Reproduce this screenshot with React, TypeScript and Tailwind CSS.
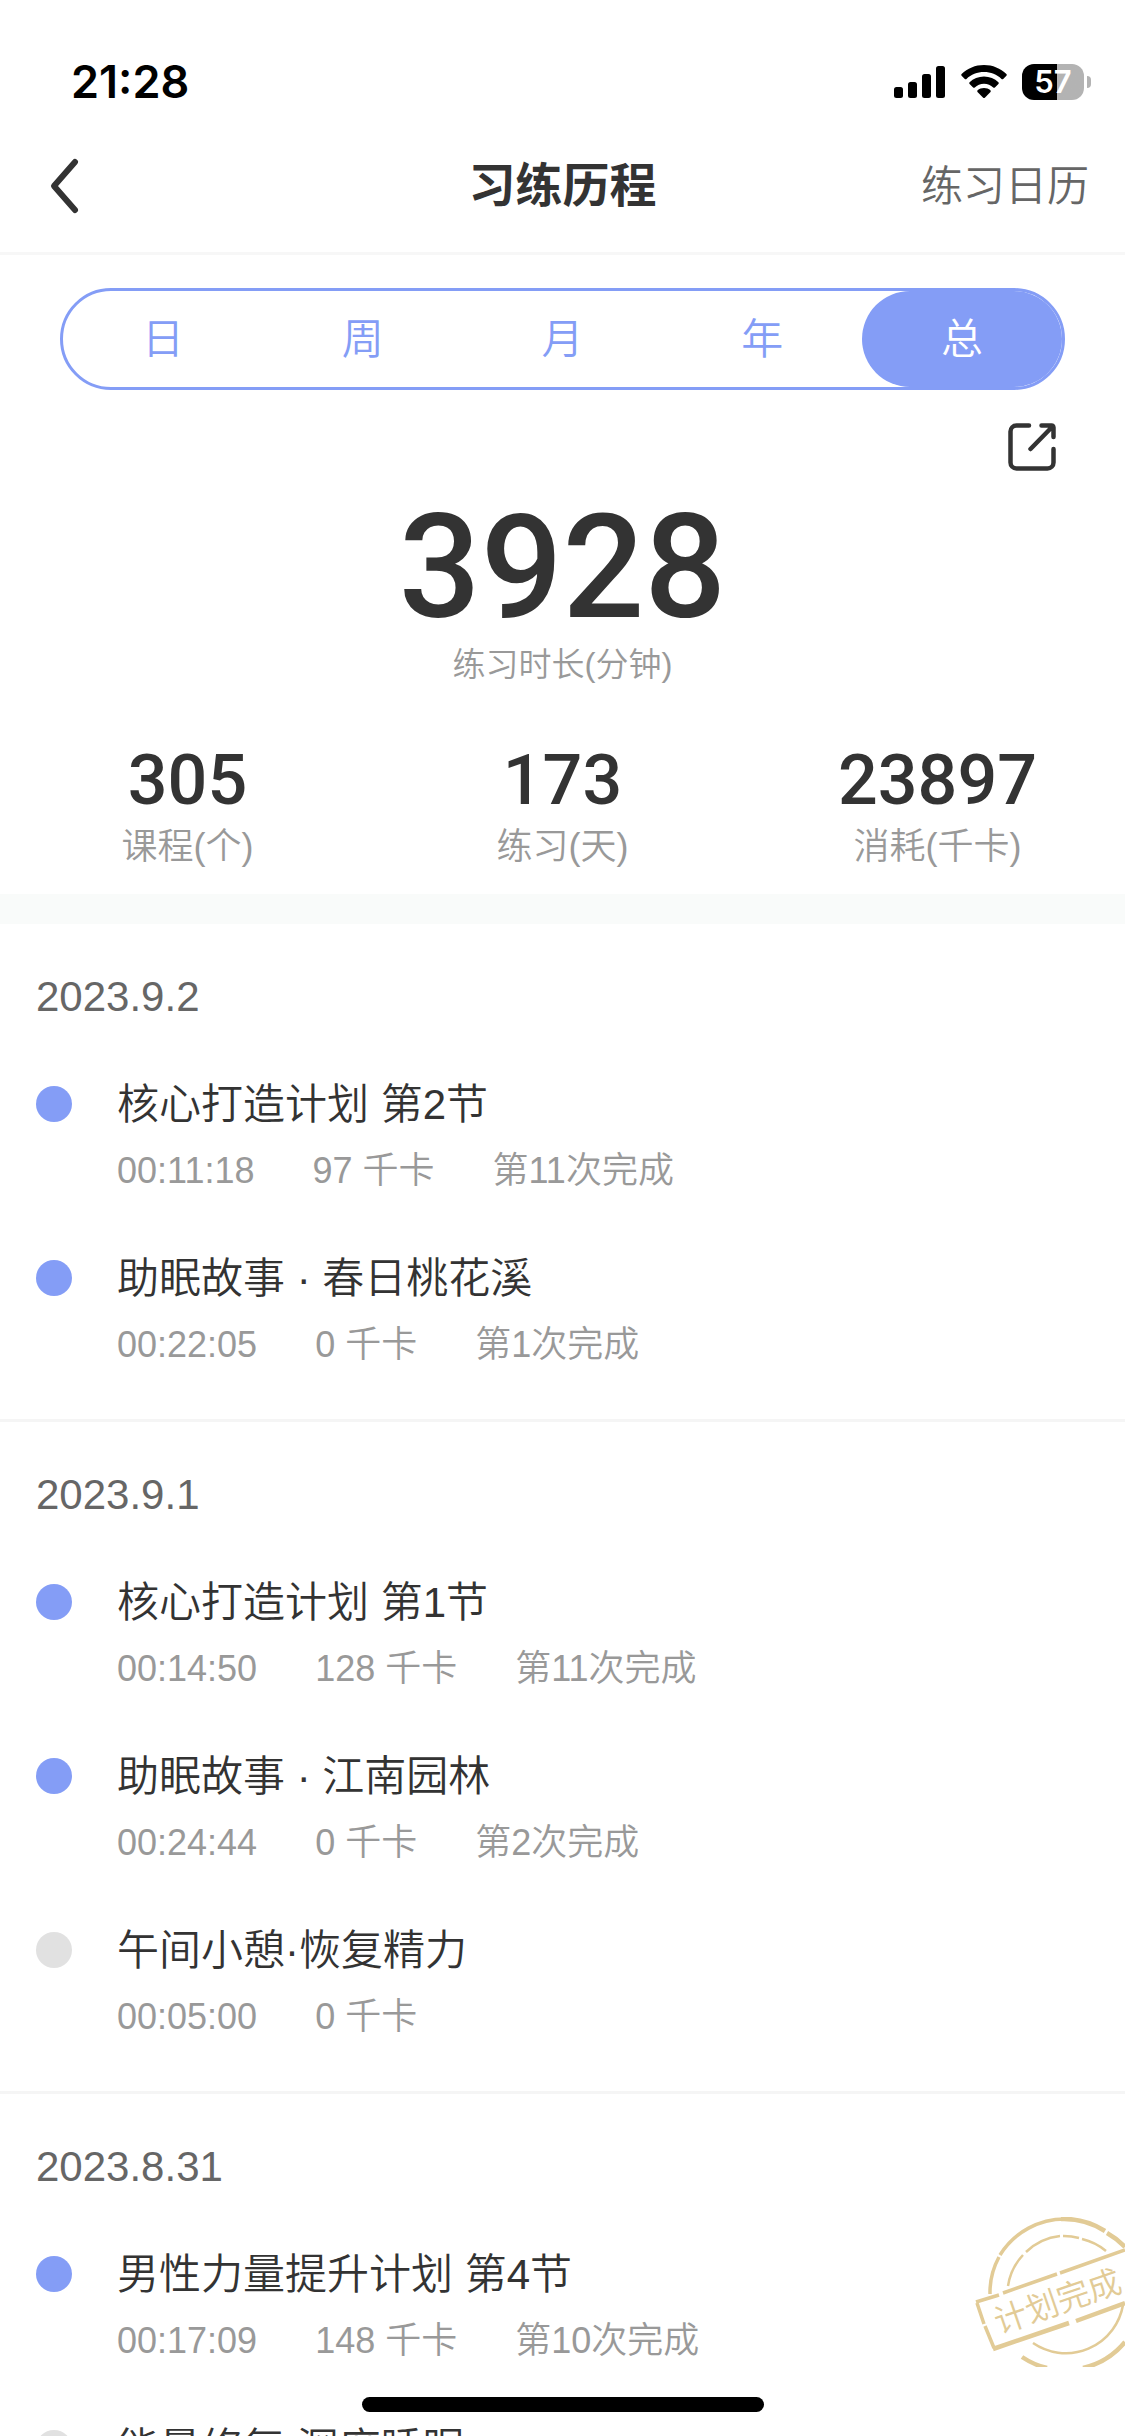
import React from "react";

interface Stat {
  value: string;
  label: string;
}

interface Practice {
  title: string;
  duration: string;
  calories: string;
  times?: string;
  planFinished?: boolean;
}

interface PracticeDay {
  date: string;
  items: Practice[];
}

const tabs = ["日", "周", "月", "年", "总"];

const stats: Stat[] = [
  { value: "305", label: "课程(个)" },
  { value: "173", label: "练习(天)" },
  { value: "23897", label: "消耗(千卡)" },
];

const days: PracticeDay[] = [
  {
    date: "2023.9.2",
    items: [
      { title: "核心打造计划 第2节", duration: "00:11:18", calories: "97 千卡", times: "第11次完成" },
      { title: "助眠故事 · 春日桃花溪", duration: "00:22:05", calories: "0 千卡", times: "第1次完成" },
    ],
  },
  {
    date: "2023.9.1",
    items: [
      { title: "核心打造计划 第1节", duration: "00:14:50", calories: "128 千卡", times: "第11次完成" },
      { title: "助眠故事 · 江南园林", duration: "00:24:44", calories: "0 千卡", times: "第2次完成" },
      { title: "午间小憩·恢复精力", duration: "00:05:00", calories: "0 千卡" },
    ],
  },
  {
    date: "2023.8.31",
    items: [
      {
        title: "男性力量提升计划 第4节",
        duration: "00:17:09",
        calories: "148 千卡",
        times: "第10次完成",
        planFinished: true,
      },
      { title: "能量修复 深度睡眠", duration: "00:10:00", calories: "0 千卡" },
    ],
  },
];

const StatusBar: React.FC = () => (
  <div className="flex h-[120px] shrink-0 items-center justify-between pt-11 pr-[34px] pl-[71px] text-black">
    <span className="font-['Inter',sans-serif] text-[45px] font-semibold">21:28</span>
    <div className="flex items-center">
      <svg width="51" height="36" viewBox="0 0 51 36" aria-hidden="true">
        <rect x="0" y="23" width="9" height="11" rx="2.5" />
        <rect x="14" y="18" width="9" height="16" rx="2.5" />
        <rect x="28" y="10" width="9" height="24" rx="2.5" />
        <rect x="42" y="2" width="9" height="32" rx="2.5" />
      </svg>
      <svg className="ml-4" width="46" height="36" viewBox="0 0 46 36" aria-hidden="true">
        <path d="M23 1C14.300 1 6.400 4.400 .6 10c-.5.500-.5 1.200 0 1.700l3.200 3.200c.5.500 1.200.500 1.700 0C10.100 10.600 16.200 8 23 8s12.900 2.600 17.500 6.900c.5.500 1.200.500 1.700 0l3.200-3.200c.5-.5.500-1.200 0-1.700C39.600 4.400 31.700 1 23 1z" />
        <path d="M23 12.500c-5.600 0-10.700 2.200-14.400 5.800-.5.500-.5 1.200 0 1.700l3.500 3.400c.5.500 1.200.500 1.700 0 2.400-2.300 5.600-3.700 9.200-3.700s6.800 1.400 9.200 3.700c.5.500 1.200.500 1.700 0l3.500-3.400c.5-.5.500-1.200 0-1.700-3.700-3.600-8.800-5.800-14.400-5.800z" />
        <path d="M23 24c-2.500 0-4.700.9-6.400 2.300-.5.500-.5 1.100-.1 1.600l5.700 5.800c.5.500 1.100.500 1.600 0l5.700-5.800c.4-.5.400-1.100-.1-1.600C27.700 24.900 25.500 24 23 24z" />
      </svg>
      <div className="ml-[15px] flex h-9 w-[62px] items-center justify-center rounded-xl bg-linear-to-r from-black from-57% to-[#b3b3b3] to-57%">
        <span className="font-['Inter',sans-serif] text-[31px] font-semibold text-white">57</span>
      </div>
      <span className="ml-[3px] h-3 w-1 rounded-r-full bg-[#b3b3b3]" />
    </div>
  </div>
);

const NavBar: React.FC = () => (
  <header className="grid h-[135px] shrink-0 grid-cols-3 items-center border-b-3 border-[#f7f7f7] px-9">
    <button type="button" aria-label="返回" className="justify-self-start pl-3">
      <svg width="32" height="58" viewBox="0 0 32 58" fill="none" stroke="#333" strokeWidth="6" strokeLinecap="round" strokeLinejoin="round">
        <path d="M27 5 6 29l21 24" />
      </svg>
    </button>
    <h1 className="justify-self-center text-[47px] font-bold whitespace-nowrap text-[#333]">习练历程</h1>
    <a href="#calendar" className="justify-self-end text-[42px] whitespace-nowrap text-[#666]">
      练习日历
    </a>
  </header>
);

const RangeTabs: React.FC = () => (
  <nav className="mx-15 mt-[33px] flex h-[102px] rounded-full border-3 border-[#849df6]">
    {tabs.map((tab) => (
      <button
        key={tab}
        type="button"
        className={
          tab === "总"
            ? "flex-1 rounded-full bg-[#849df6] text-[42px] text-white"
            : "flex-1 rounded-full text-[42px] text-[#849df6]"
        }
      >
        {tab}
      </button>
    ))}
  </nav>
);

const Summary: React.FC = () => (
  <section className="border-b-30 border-[#f9fbfa] pb-5 text-center">
    <div className="mt-[33px] flex justify-end pr-[69px]">
      <button type="button" aria-label="分享">
        <svg width="48" height="48" viewBox="0 0 48 48" fill="none" stroke="#333" strokeWidth="4.500" strokeLinecap="round" strokeLinejoin="round">
          <path d="M21 2.500H8.500a6 6 0 0 0-6 6v31a6 6 0 0 0 6 6h31a6 6 0 0 0 6-6V26" />
          <path d="M33.500 2.500h10a2 2 0 0 1 2 2V14M45 3 22.500 26" />
        </svg>
      </button>
    </div>
    <p className="mt-6 font-['Roboto',sans-serif] text-[144px] leading-[146px] font-medium text-[#333]">3928</p>
    <p className="text-[33px] leading-12 text-[#999]">练习时长(分钟)</p>
    <dl className="mt-[55px] grid grid-cols-3">
      {stats.map((stat) => (
        <div key={stat.label} className="flex flex-col-reverse gap-1">
          <dt className="text-4xl leading-[54px] text-[#999]">{stat.label}</dt>
          <dd className="font-['Roboto',sans-serif] text-[70px] leading-[72px] font-medium text-[#333]">{stat.value}</dd>
        </div>
      ))}
    </dl>
  </section>
);

const PlanStamp: React.FC = () => (
  <svg
    className="absolute -top-7 right-0"
    width="150"
    height="150"
    viewBox="0 0 150 150"
    fill="none"
    stroke="#e2cb96"
    role="img"
    aria-label="计划完成"
  >
    <path d="M15 77A76 75 0 0 1 24 40M25 38A76 75 0 0 1 92 2" strokeWidth="3.500" />
    <path d="M86 2A76 76 0 0 1 130 14M132 16A76 76 0 0 1 150 30" strokeWidth="4.500" />
    <path d="M47 140A76 76 0 0 0 72 151M108 151A76 76 0 0 0 150 125" strokeWidth="4.500" />
    <path d="M33 69A58 58 0 0 1 48 38M51 35A58 58 0 0 1 85 19M88 19A58 58 0 0 1 104 21M107 22A58 58 0 0 1 131 34" strokeWidth="2.500" />
    <path d="M58 126A58 58 0 0 0 148 88" strokeWidth="2.500" />
    <path d="M1 85 24 78M28 76 82 57M85 56 150 33" strokeWidth="3.500" />
    <path d="M2 86 9 107M10 109 19 131" strokeWidth="3.500" />
    <path d="M18 132 94 106M101 104 150 86" strokeWidth="4.500" />
    <text x="24" y="117" transform="rotate(-19 24 117)" fontSize="33" fill="#e2cb96" stroke="none">
      计划完成
    </text>
  </svg>
);

const PracticeItem: React.FC<{ item: Practice }> = ({ item }) => (
  <li className="relative flex gap-[45px] pl-9">
    <span
      className={
        item.times
          ? "mt-[11px] size-9 shrink-0 rounded-full bg-[#849df6]"
          : "mt-[11px] size-9 shrink-0 rounded-full bg-[#e1e1e1]"
      }
    />
    <div>
      <h3 className="text-[42px] leading-[60px] text-[#333]">{item.title}</h3>
      <p className="mt-[9px] flex gap-[58px] text-4xl leading-[54px] text-[#999]">
        <span>{item.duration}</span>
        <span>{item.calories}</span>
        {item.times && <span>{item.times}</span>}
      </p>
    </div>
    {item.planFinished && <PlanStamp />}
  </li>
);

const App: React.FC = () => (
  <div className="relative flex h-screen flex-col overflow-hidden bg-white font-['Liberation_Sans','Noto_Sans_CJK_SC',sans-serif] font-[350]">
    <StatusBar />
    <NavBar />
    <main className="min-h-0 flex-1 overflow-hidden">
      <RangeTabs />
      <Summary />
      {days.map((day) => (
        <section key={day.date} className="border-b-3 border-[#f5f5f5] pt-[43px] pb-[47px]">
          <h2 className="pl-9 text-[42px] leading-[60px] font-normal text-[#666]">{day.date}</h2>
          <ul className="mt-12 flex flex-col gap-[51px]">
            {day.items.map((item) => (
              <PracticeItem key={item.title} item={item} />
            ))}
          </ul>
        </section>
      ))}
    </main>
    <div className="absolute bottom-6 left-1/2 h-[15px] w-[402px] -translate-x-1/2 rounded-full bg-black" />
  </div>
);

export default App;
